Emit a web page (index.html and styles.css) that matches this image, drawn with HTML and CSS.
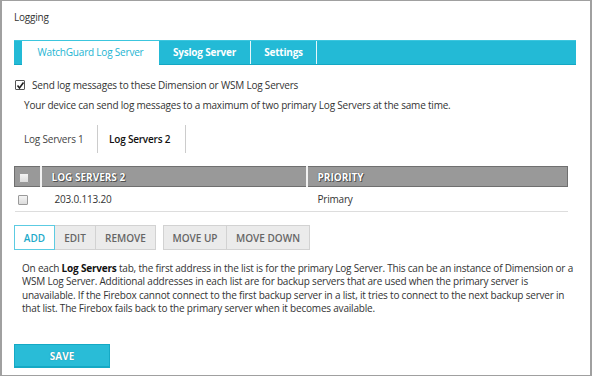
FILE: index.html
```html
<!DOCTYPE html>
<html lang="en">
<head>
  <meta charset="UTF-8">
  <title>Logging</title>
  <link rel="stylesheet" href="styles.css">
</head>
<body>
  <div class="panel">
    <h1>Logging</h1>

    <div class="tabs">
      <div class="tab active">WatchGuard Log Server</div>
      <div class="tab syslog">Syslog Server</div>
      <div class="tab settings">Settings</div>
    </div>

    <label class="check-row">
      <span class="box checked">
        <svg width="9" height="9" viewBox="0 0 9 9"><path d="M1.5 4.5 L3.5 7 L7.5 1.5" fill="none" stroke="#222" stroke-width="1.6"/></svg>
      </span>
      Send log messages to these Dimension or WSM Log Servers
    </label>
    <p class="note">Your device can send log messages to a maximum of two primary Log Servers at the same time.</p>

    <div class="subtabs">
      <div class="subtab">Log Servers 1</div>
      <div class="subtab current">Log Servers 2</div>
    </div>

    <table class="grid">
      <thead>
        <tr>
          <th class="col-check"><span class="box"></span></th>
          <th class="col-name">Log Servers 2</th>
          <th>Priority</th>
        </tr>
      </thead>
      <tbody>
        <tr>
          <td class="col-check"><span class="box"></span></td>
          <td class="col-name">203.0.113.20</td>
          <td>Primary</td>
        </tr>
      </tbody>
    </table>

    <div class="actions">
      <div class="btn-group">
        <button class="btn primary w-add">Add</button>
        <button class="btn w-edit">Edit</button>
        <button class="btn w-remove">Remove</button>
      </div>
      <div class="btn-group">
        <button class="btn w-up">Move Up</button>
        <button class="btn w-down">Move Down</button>
      </div>
    </div>

    <p class="help">On each <b>Log Servers</b> tab, the first address in the list is for the primary Log Server. This can be an instance of Dimension or a WSM Log Server. Additional addresses in each list are for backup servers that are used when the primary server is unavailable. If the Firebox cannot connect to the first backup server in a list, it tries to connect to the next backup server in that list. The Firebox fails back to the primary server when it becomes available.</p>

    <button class="save">Save</button>
  </div>
</body>
</html>
```

FILE: styles.css
```css
* {
  margin: 0;
  padding: 0;
  box-sizing: border-box;
}

body {
  font-family: "Open Sans", Arial, sans-serif;
  font-size: 10px;
  letter-spacing: -0.2px;
  color: #333;
  background: #fff;
}

.panel {
  width: 592px;
  height: 376px;
  border: 1px solid #a0a0a0;
  border-left-width: 2px;
  border-right-width: 2px;
  padding: 9px 14px 0 12px;
}

h1 {
  font-size: 10px;
  font-weight: normal;
  line-height: 14px;
}

/* Top tabs */
.tabs {
  display: flex;
  margin-top: 16px;
  height: 25px;
  background: #23bad6;
  border-top: 1px solid #3cc6de;
  border-bottom: 1px solid #14a7c3;
  padding-left: 8px;
  white-space: nowrap;
}

.tab {
  color: #fff;
  font-weight: bold;
  line-height: 23px;
  text-align: center;
  border-right: 1px solid #e6f7fb;
}

.tab.active {
  background: #fff;
  color: #23b4d2;
  font-weight: normal;
  width: 137px;
  margin-bottom: -1px;
  border-right: none;
}

.tab.syslog {
  width: 92px;
}

.tab.settings {
  width: 66px;
}

/* Checkbox */
.box {
  display: inline-block;
  width: 10px;
  height: 10px;
  border: 1px solid #9a9a9a;
  border-radius: 1px;
  background: linear-gradient(#f4f4f4, #dcdcdc);
  vertical-align: middle;
}

.box.checked {
  background: #fff;
  border-color: #555;
  position: relative;
}

.box.checked svg {
  position: absolute;
  left: 0;
  top: 0;
}

.check-row {
  display: flex;
  align-items: center;
  gap: 7px;
  margin-top: 13px;
  margin-left: 1px;
  line-height: 14px;
}

.note {
  margin-top: 6px;
  margin-left: 10px;
  line-height: 14px;
}

/* Sub tabs */
.subtabs {
  display: flex;
  margin-top: 13px;
  height: 28px;
  white-space: nowrap;
}

.subtab {
  width: 84px;
  padding-left: 10px;
  line-height: 28px;
  color: #444;
  border-right: 1px solid #ccc;
}

.subtab.current {
  color: #111;
  font-weight: 600;
  width: 88px;
  padding-left: 11px;
}

/* Table */
.grid {
  margin-top: 13px;
  width: 554px;
  border-collapse: collapse;
}

.grid th {
  background: #999;
  color: #fff;
  text-shadow: 0 0 1px #333, 1px 1px 0 #555;
  font-size: 10px;
  font-weight: bold;
  letter-spacing: 0;
  text-transform: uppercase;
  text-align: left;
  height: 20px;
  padding: 0 10px;
  border: 1px solid #6f6f6f;
  border-right: 2px solid #f2f2f2;
}

.grid th:last-child {
  border-right: 1px solid #6f6f6f;
}

.grid td {
  height: 25px;
  padding: 0 11px;
  border-bottom: 1px solid #ddd;
}

.grid .col-check {
  width: 26px;
  padding: 0 0 0 3px;
}

.grid th.col-check {
  padding-left: 4px;
}

.grid .col-name {
  width: 266px;
}

.grid td.col-name {
  padding-left: 14px;
}

/* Buttons */
.actions {
  display: flex;
  gap: 7px;
  margin-top: 13px;
}

.btn-group {
  display: flex;
}

.btn {
  font-family: "Open Sans", Arial, sans-serif;
  font-size: 10px;
  font-weight: 600;
  text-transform: uppercase;
  color: #666;
  height: 25px;
  padding: 0;
  background: #ebebeb;
  border: 1px solid #d2d2d2;
  margin-left: -1px;
}

.btn-group .btn:first-child {
  margin-left: 0;
}

.btn.primary {
  background: #fff;
  color: #1ea9c9;
  border-color: #5ccbe2;
  position: relative;
}

.w-add { width: 41px; }
.w-edit { width: 42px; }
.w-remove { width: 61px; }
.w-up { width: 64px; }
.w-down { width: 84px; }

.help {
  margin-top: 12px;
  margin-left: 8px;
  line-height: 13.3px;
}

.help b {
  color: #111;
}

.save {
  display: block;
  margin-top: 29px;
  width: 96px;
  height: 24px;
  background: #29bcd7;
  border: 1px solid #15a9c5;
  border-bottom-width: 2px;
  color: #fff;
  font-family: "Open Sans", Arial, sans-serif;
  font-weight: bold;
  font-size: 10px;
  text-transform: uppercase;
  text-shadow: 0 0 1px #147a8e;
}
```
